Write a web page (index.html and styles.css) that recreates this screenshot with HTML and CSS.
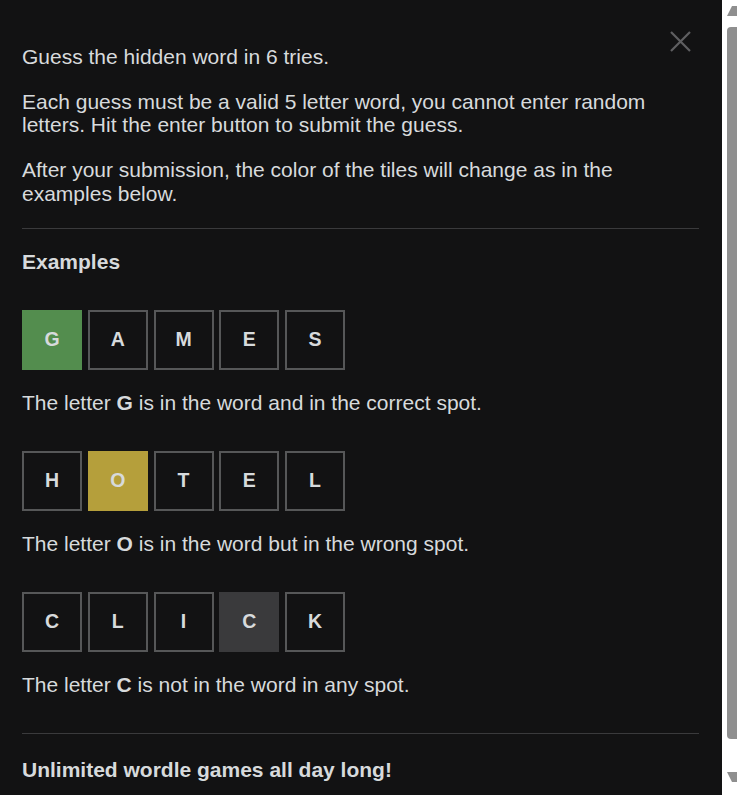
FILE: index.html
```html
<!DOCTYPE html>
<html lang="en">
<head>
<meta charset="utf-8">
<title>How to play</title>
<link rel="stylesheet" href="styles.css">
</head>
<body>
<div class="modal">
  <button class="close" aria-label="Close">
    <svg width="21" height="21" viewBox="0 0 21 21"><path d="M1 1 L20 20 M20 1 L1 20" stroke="#5f5f61" stroke-width="2.2" fill="none"/></svg>
  </button>
  <p>Guess the hidden word in 6 tries.</p>
  <p>Each guess must be a valid 5 letter word, you cannot enter random letters. Hit the enter button to submit the guess.</p>
  <p>After your submission, the color of the tiles will change as in the examples below.</p>
  <div class="divider"></div>
  <p class="heading">Examples</p>

  <div class="row">
    <div class="tile correct">G</div>
    <div class="tile">A</div>
    <div class="tile">M</div>
    <div class="tile">E</div>
    <div class="tile">S</div>
  </div>
  <p>The letter <b>G</b> is in the word and in the correct spot.</p>

  <div class="row">
    <div class="tile">H</div>
    <div class="tile present">O</div>
    <div class="tile">T</div>
    <div class="tile">E</div>
    <div class="tile">L</div>
  </div>
  <p>The letter <b>O</b> is in the word but in the wrong spot.</p>

  <div class="row">
    <div class="tile">C</div>
    <div class="tile">L</div>
    <div class="tile">I</div>
    <div class="tile absent">C</div>
    <div class="tile">K</div>
  </div>
  <p>The letter <b>C</b> is not in the word in any spot.</p>

  <div class="divider last"></div>
  <p class="heading footer">Unlimited wordle games all day long!</p>
</div>
<aside class="scrollbar" aria-hidden="true">
  <svg width="15" height="795" viewBox="0 0 15 795">
    <rect x="0" y="0" width="15" height="795" fill="#ffffff"/>
    <path d="M10 6 L15 6 L15 16 L5 16 Z" fill="#8f8f8f"/>
    <path d="M9 27 L15 27 L15 739 L9 739 Q5 739 5 735 L5 31 Q5 27 9 27 Z" fill="#8f8f8f"/>
    <path d="M5 772 L15 772 L15 782 L10 782 Z" fill="#8f8f8f"/>
  </svg>
</aside>
</body>
</html>
```

FILE: styles.css
```css
html, body {
  margin: 0;
  padding: 0;
  background: #121213;
}

body {
  font-family: "Liberation Sans", Arial, sans-serif;
  color: #d7dadc;
  display: flex;
  align-items: flex-start;
}

.modal {
  position: relative;
  flex: 1;
  min-width: 0;
  padding: 24px 23px 24px 22px;
}

.scrollbar {
  flex: 0 0 15px;
  width: 15px;
  height: 795px;
  position: sticky;
  top: 0;
  display: flex;
}

.modal p {
  font-size: 21px;
  line-height: 23.9px;
  margin: 20.8px 0;
}

.close {
  position: absolute;
  top: 31px;
  right: 31px;
  width: 21px;
  height: 21px;
  padding: 0;
  border: 0;
  background: none;
  cursor: pointer;
  display: flex;
}

.divider {
  border-top: 1px solid #3a3a3c;
  margin: 22px 0 0;
}

.divider.last {
  margin-top: 36.3px;
}

.heading {
  font-weight: bold;
}

.modal p.footer {
  margin-top: 24.2px;
}

.row {
  display: flex;
  gap: 5.75px;
  margin-top: 36.3px;
}

.tile {
  box-sizing: border-box;
  width: 60px;
  height: 60px;
  border: 2px solid #565758;
  display: flex;
  align-items: center;
  justify-content: center;
  font-weight: bold;
  font-size: 19.5px;
  color: #d7dadc;
}

.tile.correct {
  background: #538d4e;
  border-color: #538d4e;
}

.tile.present {
  background: #b59f3b;
  border-color: #b59f3b;
}

.tile.absent {
  background: #3a3a3c;
  border-color: #3a3a3c;
}
```
